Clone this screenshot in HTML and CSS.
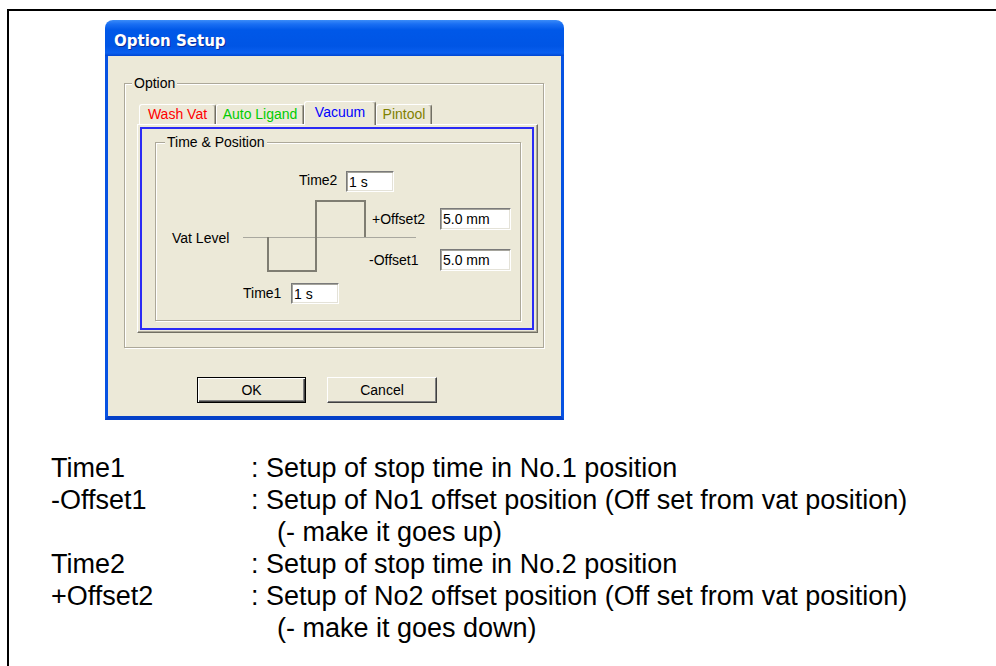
FILE: index.html
```html
<!DOCTYPE html>
<html lang="en">
<head>
  <meta charset="UTF-8">
  <meta name="viewport" content="width=device-width, initial-scale=1.0">
  <title>Option Setup - Vacuum</title>
  <link rel="stylesheet" href="styles.css">
</head>
<body>
  <div class="sheet">
    <div class="window">
      <div class="titlebar">Option Setup</div>
      <div class="client">
        <fieldset class="group option-group">
          <legend>Option</legend>
          <div class="tabs">
            <div class="tab tab-wash">Wash Vat</div>
            <div class="tab tab-ligand">Auto Ligand</div>
            <div class="tab tab-vacuum active">Vacuum</div>
            <div class="tab tab-pintool">Pintool</div>
          </div>
          <div class="tab-page">
            <div class="tab-frame">
              <fieldset class="group time-group">
                <legend>Time &amp; Position</legend>
                <div class="diagram">
                  <svg class="wave" width="364" height="169" viewBox="0 0 364 169">
                    <path d="M87 86.5 H260" stroke="#a9a89f" stroke-width="1" fill="none"/>
                    <path d="M112 86 V120 H160 V50 H209 V86" stroke="#7f7d72" stroke-width="2" fill="none"/>
                  </svg>
                  <span class="lbl lbl-time2">Time2</span>
                  <input class="box in-time2" type="text" value="1 s" readonly>
                  <span class="lbl lbl-offset2">+Offset2</span>
                  <input class="box in-offset2" type="text" value="5.0 mm" readonly>
                  <span class="lbl lbl-vat">Vat Level</span>
                  <span class="lbl lbl-offset1">-Offset1</span>
                  <input class="box in-offset1" type="text" value="5.0 mm" readonly>
                  <span class="lbl lbl-time1">Time1</span>
                  <input class="box in-time1" type="text" value="1 s" readonly>
                </div>
              </fieldset>
            </div>
          </div>
        </fieldset>
        <div class="buttons">
          <button class="btn btn-default">OK</button>
          <button class="btn">Cancel</button>
        </div>
      </div>
    </div>

    <div class="notes">
      <span>Time1</span><span>: Setup of stop time in No.1 position</span>
      <span>-Offset1</span><span>: Setup of No1 offset position (Off set from vat position)</span>
      <span></span><span class="indent">(- make it goes up)</span>
      <span>Time2</span><span>: Setup of stop time in No.2 position</span>
      <span>+Offset2</span><span>: Setup of No2 offset position (Off set from vat position)</span>
      <span></span><span class="indent">(- make it goes down)</span>
    </div>
  </div>
</body>
</html>
```

FILE: styles.css
```css
* {
  box-sizing: border-box;
}
html, body {
  height: 100%;
}
body {
  margin: 0;
  background: #fff;
  overflow: hidden;
  font-family: "Liberation Sans", Arial, sans-serif;
}
.sheet {
  margin: 9px 0 0 7px;
  height: calc(100% - 9px);
  padding-top: 9px;
  border-top: 2px solid #000;
  border-left: 2px solid #000;
}

/* dialog window */
.window {
  width: 459px;
  margin-left: 96px;
  border-radius: 8px 8px 0 0;
  overflow: hidden;
}
.titlebar {
  height: 36px;
  padding: 6px 9px 0;
  line-height: 30px;
  font-family: "DejaVu Sans", sans-serif;
  font-weight: bold;
  font-size: 15px;
  color: #fff;
  text-shadow: 1px 1px #0c2d9a;
  background: linear-gradient(#3b8cf8 0, #1a6ff3 4px, #0058e8 10px, #0055e5 26px, #0a5fef 33px, #0046d1 36px);
}
.client {
  height: 364px;
  padding: 19px 0 0 16px;
  background: #ece9d8;
  border: 3px solid #0752e2;
  border-top: 0;
  border-bottom: 4px solid #0440c8;
  font-size: 14px;
  color: #000;
}

/* group boxes */
.group {
  margin: 0;
  padding: 0;
  min-width: 0;
  border: 1px solid #aca899;
  box-shadow: inset 1px 1px #fff, 1px 1px #fff;
}
.group legend {
  padding: 0 2px;
  line-height: 17px;
  background: #ece9d8;
}
.option-group {
  width: 420px;
}
.option-group > legend {
  margin-left: 7px;
}
.time-group {
  width: 366px;
}
.time-group > legend {
  margin-left: 9px;
}

/* tabs */
.tabs {
  display: flex;
  align-items: flex-end;
  height: 23px;
  margin: 9px 0 0 14px;
}
.tab {
  height: 20px;
  padding-top: 1px;
  line-height: 16px;
  text-align: center;
  background: #ece9d8;
  border: 1px solid;
  border-color: #fff #716f64 transparent #fff;
  border-bottom: 0;
  border-radius: 3px 3px 0 0;
  box-shadow: inset -1px 0 #aca899;
}
.tab.active {
  height: 24px;
  padding-top: 2px;
  margin-bottom: -1px;
  position: relative;
  z-index: 1;
}
.tab-wash { width: 77px; color: #ff0000; }
.tab-ligand { width: 88px; color: #00cc00; }
.tab-vacuum { width: 72px; color: #0000ff; }
.tab-pintool { width: 56px; color: #808000; }

.tab-page {
  width: 401px;
  height: 209px;
  margin: 0 0 14px 12px;
  padding: 2px 3px 2px 2px;
  border: 1px solid;
  border-color: #fff #716f64 #716f64 #fff;
  box-shadow: inset -1px -1px #aca899;
}
.tab-frame {
  height: 100%;
  padding: 5px 0 0 13px;
  border: 2px solid #2b2bf5;
}

/* time & position diagram */
.diagram {
  position: relative;
  height: 169px;
}
.wave {
  display: block;
}
.lbl {
  position: absolute;
  line-height: 16px;
  white-space: nowrap;
}
.box {
  position: absolute;
  height: 21px;
  padding: 0 2px;
  font-family: inherit;
  font-size: 14px;
  color: #000;
  background: #fff;
  border: 1px solid;
  border-color: #7a7a7a #fff #fff #7a7a7a;
  box-shadow: inset 1px 1px #a5a49c, inset -1px -1px #e4e2d8;
  outline: none;
}
.lbl-time2 { left: 143px; top: 21px; }
.in-time2 { left: 190px; top: 20px; width: 48px; }
.lbl-offset2 { left: 216px; top: 60px; }
.in-offset2 { left: 284px; top: 57px; width: 71px; height: 22px; }
.lbl-vat { left: 16px; top: 79px; }
.lbl-offset1 { left: 213px; top: 101px; }
.in-offset1 { left: 284px; top: 98px; width: 71px; height: 22px; }
.lbl-time1 { left: 87px; top: 134px; }
.in-time1 { left: 135px; top: 132px; width: 48px; }

/* buttons */
.buttons {
  display: flex;
  gap: 21px;
  margin: 29px 0 0 73px;
}
.btn {
  width: 110px;
  height: 26px;
  padding: 0;
  font-family: inherit;
  font-size: 14px;
  color: #000;
  background: #ece9d8;
  border: 1px solid;
  border-color: #fff #404040 #404040 #fff;
  box-shadow: inset -1px -1px #808080;
}
.btn-default {
  width: 109px;
  border-color: #000;
  box-shadow: inset 1px 1px #fff, inset -1px -1px #404040, inset -2px -2px #808080;
}

/* notes under the dialog */
.notes {
  display: grid;
  grid-template-columns: 200px auto;
  margin: 32px 0 0 42px;
  font-size: 27px;
  line-height: 32px;
  color: #000;
}
.indent {
  padding-left: 26px;
}
```
